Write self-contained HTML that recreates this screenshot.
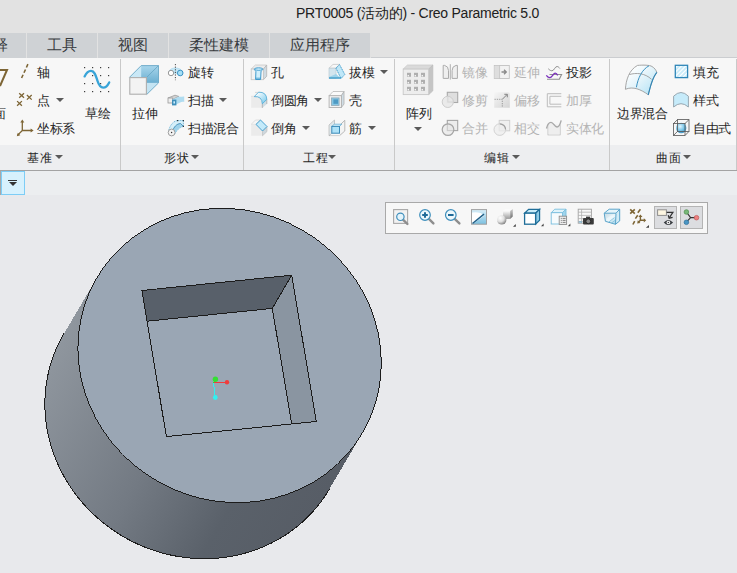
<!DOCTYPE html>
<html><head><meta charset="utf-8">
<style>
*{margin:0;padding:0;box-sizing:border-box}
html,body{width:737px;height:573px;overflow:hidden;background:#e8e9ec;font-family:"Liberation Sans",sans-serif;position:relative}
.a{position:absolute}
#title{left:0;top:0;width:737px;height:58px;background:#e2e2e2}
#ttxt{left:296px;top:5px;font-size:14px;letter-spacing:-0.25px;line-height:16px;color:#202020;white-space:nowrap}
#tabs{left:0;top:33px;width:370px;height:25px;background:#cfd2d5}
.tab{top:33px;height:25px;font-size:15px;color:#383b3e;line-height:23px;white-space:nowrap}
.tdiv{top:33px;width:1px;height:25px;background:#e2e2e2}
#ribbon{left:0;top:58px;width:737px;height:87px;background:#f7f7f7}
#band{left:0;top:145px;width:737px;height:25px;background:#edeef0}
#bline{left:0;top:170px;width:737px;height:1px;background:#a3a3a3}
#trow{left:0;top:171px;width:737px;height:24px;background:#eceef0}
.sep{top:59px;width:1px;height:111px;background:#c9c9c9}
.t{font-size:13px;letter-spacing:-0.5px;color:#262626;white-space:nowrap;line-height:16px}
.g{color:#b4b4b4}
.lb{font-size:12px;letter-spacing:1px;line-height:16px}
.dd{width:0;height:0;border-left:4px solid transparent;border-right:4px solid transparent;border-top:4.5px solid #5a5a5a}
</style></head><body>
<svg class="a" style="left:0;top:0" width="737" height="573" viewBox="0 0 737 573" shape-rendering="crispEdges">
<defs><linearGradient id="cyl" gradientUnits="userSpaceOnUse" x1="96" y1="278" x2="362" y2="432">
<stop offset="0" stop-color="#8f969e"/><stop offset="0.45" stop-color="#737a83"/><stop offset="0.75" stop-color="#5a616a"/><stop offset="1" stop-color="#575d66"/></linearGradient></defs>
<path d="M362.27 433.30 L329.27 489.30 L326.87 493.22 L324.33 497.06 L321.67 500.82 L318.88 504.48 L315.97 508.06 L312.94 511.53 L309.79 514.91 L306.53 518.18 L303.16 521.34 L299.67 524.39 L296.09 527.33 L292.41 530.15 L288.62 532.86 L284.75 535.44 L280.79 537.89 L276.74 540.22 L272.61 542.42 L268.41 544.49 L264.13 546.42 L259.79 548.22 L255.38 549.88 L250.91 551.40 L246.39 552.78 L241.82 554.01 L237.20 555.11 L232.54 556.05 L227.84 556.86 L223.12 557.52 L218.36 558.03 L213.59 558.39 L208.80 558.60 L203.99 558.67 L199.18 558.59 L194.37 558.36 L189.55 557.98 L184.75 557.45 L179.96 556.78 L175.18 555.96 L170.42 555.00 L165.70 553.89 L161.00 552.64 L156.34 551.25 L151.72 549.71 L147.14 548.04 L142.61 546.23 L138.14 544.28 L133.73 542.20 L129.38 539.99 L125.10 537.64 L120.89 535.18 L116.75 532.58 L112.70 529.87 L108.73 527.03 L104.85 524.08 L101.06 521.02 L97.37 517.84 L93.78 514.56 L90.29 511.18 L86.91 507.69 L83.64 504.11 L80.48 500.43 L77.44 496.67 L74.52 492.82 L71.73 488.89 L69.05 484.88 L66.51 480.79 L64.10 476.64 L61.82 472.42 L59.68 468.14 L57.67 463.80 L55.81 459.41 L54.08 454.97 L52.50 450.48 L51.07 445.96 L49.78 441.40 L48.64 436.82 L47.65 432.21 L46.81 427.57 L46.12 422.92 L45.58 418.26 L45.19 413.59 L44.96 408.92 L44.87 404.26 L44.94 399.60 L45.17 394.95 L45.54 390.32 L46.07 385.71 L46.75 381.12 L47.58 376.57 L48.56 372.05 L49.69 367.57 L50.97 363.14 L52.40 358.75 L53.96 354.42 L55.68 350.14 L57.53 345.93 L59.53 341.78 L61.66 337.71 L63.93 333.70 L96.93 277.70 Z" fill="url(#cyl)"/><path d="M329.27 489.30 L326.87 493.22 L324.33 497.06 L321.67 500.82 L318.88 504.48 L315.97 508.06 L312.94 511.53 L309.79 514.91 L306.53 518.18 L303.16 521.34 L299.67 524.39 L296.09 527.33 L292.41 530.15 L288.62 532.86 L284.75 535.44 L280.79 537.89 L276.74 540.22 L272.61 542.42 L268.41 544.49 L264.13 546.42 L259.79 548.22 L255.38 549.88 L250.91 551.40 L246.39 552.78 L241.82 554.01 L237.20 555.11 L232.54 556.05 L227.84 556.86 L223.12 557.52 L218.36 558.03 L213.59 558.39 L208.80 558.60 L203.99 558.67 L199.18 558.59 L194.37 558.36 L189.55 557.98 L184.75 557.45 L179.96 556.78 L175.18 555.96 L170.42 555.00 L165.70 553.89 L161.00 552.64 L156.34 551.25 L151.72 549.71 L147.14 548.04 L142.61 546.23 L138.14 544.28 L133.73 542.20 L129.38 539.99 L125.10 537.64 L120.89 535.18 L116.75 532.58 L112.70 529.87 L108.73 527.03 L104.85 524.08 L101.06 521.02 L97.37 517.84 L93.78 514.56 L90.29 511.18 L86.91 507.69 L83.64 504.11 L80.48 500.43 L77.44 496.67 L74.52 492.82 L71.73 488.89 L69.05 484.88 L66.51 480.79 L64.10 476.64 L61.82 472.42 L59.68 468.14 L57.67 463.80 L55.81 459.41 L54.08 454.97 L52.50 450.48 L51.07 445.96 L49.78 441.40 L48.64 436.82 L47.65 432.21 L46.81 427.57 L46.12 422.92 L45.58 418.26 L45.19 413.59 L44.96 408.92 L44.87 404.26 L44.94 399.60 L45.17 394.95 L45.54 390.32 L46.07 385.71 L46.75 381.12 L47.58 376.57 L48.56 372.05 L49.69 367.57 L50.97 363.14 L52.40 358.75 L53.96 354.42 L55.68 350.14 L57.53 345.93 L59.53 341.78 L61.66 337.71 L63.93 333.70" fill="none" stroke="#1c1c1c" stroke-width="1"/>
<ellipse cx="229.6" cy="355.5" rx="153.8" ry="145" transform="rotate(29.4 229.6 355.5)" fill="#9aa6b4" stroke="#1c1c1c" stroke-width="1"/>
<polygon points="141.9,290.5 291.7,275.2 272.3,308.4 147.05,321.2" fill="#58606a"/>
<polygon points="291.7,275.2 316.3,421.5 291.7,424 272.3,308.4" fill="#8a95a1"/>
<g fill="none" stroke="#1c1c1c" stroke-width="1">
<polygon points="141.9,290.5 291.7,275.2 316.3,421.5 166.4,436.6"/>
<polyline points="147.05,321.2 272.3,308.4 291.7,424"/>
<line x1="291.7" y1="275.2" x2="272.3" y2="308.4"/>
</g>
<line x1="213.5" y1="383" x2="227" y2="382.3" stroke="#f03c3c" stroke-width="1"/>
<line x1="213.5" y1="383" x2="215.3" y2="397.5" stroke="#30f0f0" stroke-width="1"/>
<line x1="213.5" y1="383" x2="215.4" y2="379.2" stroke="#30e030" stroke-width="1"/>
<g shape-rendering="geometricPrecision">
<circle cx="215.4" cy="379.2" r="2.7" fill="#33e033"/>
<circle cx="227" cy="382.2" r="2.2" fill="#f03c3c"/>
<circle cx="215.3" cy="397.5" r="2.4" fill="#33f0f0"/>
</g>
</svg>
<div class="a" id="title"></div>
<div class="a" id="ttxt">PRT0005 (活动的) - Creo Parametric 5.0</div>
<div class="a" id="tabs"></div><div class="a" style="left:371px;top:57px;width:366px;height:1px;background:#cbcdd0"></div>
<div class="a tab" style="left:-7px">释</div>
<div class="a tdiv" style="left:26px"></div>
<div class="a tab" style="left:47px">工具</div>
<div class="a tdiv" style="left:97px"></div>
<div class="a tab" style="left:118px">视图</div>
<div class="a tdiv" style="left:168px"></div>
<div class="a tab" style="left:189px">柔性建模</div>
<div class="a tdiv" style="left:269px"></div>
<div class="a tab" style="left:290px">应用程序</div>

<div class="a" id="ribbon"></div>
<div class="a" id="band"></div>
<div class="a" id="bline"></div>
<div class="a" id="trow"></div>
<div class="a sep" style="left:120px"></div>
<div class="a sep" style="left:243px"></div>
<div class="a sep" style="left:394px"></div>
<div class="a sep" style="left:609px"></div>
<div class="a sep" style="left:736px"></div>

<!--ICONS1--><svg class="a" style="left:0;top:0" width="737" height="240" viewBox="0 0 737 240">
<defs>
<linearGradient id="gb1" x1="0" y1="0" x2="0" y2="1"><stop offset="0" stop-color="#a8d6ec"/><stop offset="1" stop-color="#6aaed0"/></linearGradient>
<linearGradient id="gb2" x1="0" y1="0" x2="1" y2="1"><stop offset="0" stop-color="#f0f9fd"/><stop offset="1" stop-color="#bfe6f7"/></linearGradient>
<radialGradient id="sph" cx="0.4" cy="0.35" r="0.7"><stop offset="0" stop-color="#ffffff"/><stop offset="0.6" stop-color="#d8d8d8"/><stop offset="1" stop-color="#9a9a9a"/></radialGradient>
<radialGradient id="bsph" cx="0.4" cy="0.35" r="0.7"><stop offset="0" stop-color="#d8f2fc"/><stop offset="0.6" stop-color="#7cc6e6"/><stop offset="1" stop-color="#3a90c0"/></radialGradient>
</defs>
<!-- datum: plane partial -->
<polyline points="-1,70 7,70 0,86" fill="none" stroke="#7d6535" stroke-width="2"/>
<!-- axis -->
<line x1="27.9" y1="64.2" x2="20.9" y2="79.5" stroke="#7d6535" stroke-width="1.6" stroke-dasharray="3.6 2.2"/>
<!-- point -->
<g stroke="#7d6535" stroke-width="1.3">
<path d="M19.2 93.2l4.8 4.6M24 93.2l-4.8 4.6"/>
<path d="M26.9 95l4.8 4.6M31.7 95l-4.8 4.6"/>
<path d="M17.1 101.1l4.8 4.6M21.9 101.1l-4.8 4.6"/>
</g>
<!-- csys -->
<g stroke="#7d6535" stroke-width="1.3" fill="none">
<path d="M22.3 122v8.5h9.5M22.3 130.5l-4.6 4.6"/>
</g>
<g fill="#7d6535"><path d="M22.3 119.6l-2 3h4z"/><path d="M33.6 130.5l-3-2v4z"/><path d="M16.8 136.2l1-3.5 2.5 2.5z"/></g>
<!-- sketch -->
<g fill="#3c3c3c">
<rect x="84" y="67" width="1.2" height="1.2"/><rect x="92" y="67" width="1.2" height="1.2"/><rect x="100" y="67" width="1.2" height="1.2"/><rect x="108" y="67" width="1.2" height="1.2"/>
<rect x="92" y="75" width="1.2" height="1.2"/><rect x="100" y="75" width="1.2" height="1.2"/><rect x="108" y="75" width="1.2" height="1.2"/>
<rect x="84" y="83" width="1.2" height="1.2"/><rect x="92" y="83" width="1.2" height="1.2"/><rect x="100" y="83" width="1.2" height="1.2"/>
<rect x="84" y="91" width="1.2" height="1.2"/><rect x="92" y="91" width="1.2" height="1.2"/><rect x="100" y="91" width="1.2" height="1.2"/><rect x="108" y="91" width="1.2" height="1.2"/>
</g>
<path d="M84.6 76.4C86.5 72.5 88.8 70.9 91 70.9C94.6 70.9 95.8 75.5 97.3 80.3C98.8 85 100.4 87.6 103.2 87.6C106 87.6 107.8 85.2 109.2 82.4" fill="none" stroke="#38a4d8" stroke-width="2.3" stroke-linecap="round"/>
<!-- extrude -->
<polygon points="129.5,77.3 141.2,65.6 158.5,65.6 146.7,77.3" fill="#c9e8f6"/>
<rect x="141.2" y="65.6" width="17.3" height="17.3" fill="url(#gb1)"/>
<polygon points="146.7,82.9 158.5,82.9 146.7,94.5" fill="#c4e4f3"/>
<g stroke="#6aa8c6" stroke-width="0.9" fill="none"><path d="M129.5 77.3L141.2 65.6H158.5L146.7 77.3M158.5 65.6V82.9L146.7 94.5"/></g>
<rect x="129.8" y="77.6" width="16.6" height="16.6" fill="#f3f3f3" stroke="#aeaeae" stroke-width="1.1"/>
<!-- revolve -->
<path d="M168.6 72.6C169.4 69 172.5 68 175.4 68C178.3 68 181.6 69 182.8 72.6Z" fill="#c4e7f6"/>
<path d="M168.6 72.6C169.4 69 172.5 68 175.4 68C178.3 68 181.6 69 182.8 72.6" fill="none" stroke="#a6d6ec" stroke-width="0.7"/>
<circle cx="171" cy="73" r="2.7" fill="#fff" stroke="#8c8c8c" stroke-width="0.9"/>
<circle cx="180.2" cy="73" r="2.8" fill="#a6dff6" stroke="#3a92c4" stroke-width="1"/>
<line x1="173.7" y1="73" x2="177.4" y2="73" stroke="#7cc0e0" stroke-width="0.8"/>
<line x1="175.4" y1="64" x2="175.4" y2="80.2" stroke="#3a3a3a" stroke-width="0.9" stroke-dasharray="1.2 1.4"/>
<!-- sweep -->
<polygon points="168,98 175,95.2 179,96.5 172,99.6" fill="#d2d2d2" stroke="#9a9a9a" stroke-width="0.8"/>
<rect x="168" y="98" width="4.5" height="5" fill="#eeeeee" stroke="#9a9a9a" stroke-width="0.8"/>
<path d="M172 99.6L179 96.5C181 97.5 182.5 96 184.2 96.5V102C182 101 179 103 176.4 104.5Z" fill="#b0dcf0"/>
<rect x="172" y="99.6" width="4.4" height="5.8" fill="#3f8fba"/>
<rect x="173.4" y="101.3" width="1.6" height="2.2" fill="#cfefff"/>
<!-- swept blend -->
<path d="M168.8 130.3C170 125 173.5 121 177.6 120.5H183.4V126.4C179 127.5 176 131 174.6 134.3Z" fill="#d6eff9" stroke="#6ab2d6" stroke-width="0.9" stroke-dasharray="1.2 0.8"/><path d="M172.5 131C174 127 176.5 123.8 180.6 123.5L183.4 126.4C179 127.5 176 131 174.6 134.3Z" fill="#9fd2ea"/>
<path d="M172.5 131C174 127 176.5 123.8 180.6 123.5L183.4 126.4" fill="none" stroke="#3c8cb8" stroke-width="0.9"/>
<circle cx="171.6" cy="132.5" r="3.4" fill="#f2f2f2" stroke="#a0a0a0" stroke-width="1"/>
<circle cx="171.6" cy="132.5" r="0.7" fill="#333"/>
<rect x="177" y="120" width="1.2" height="1.2" fill="#333"/><rect x="182.8" y="120" width="1.2" height="1.2" fill="#333"/><rect x="182.8" y="125.8" width="1.2" height="1.2" fill="#333"/>
</svg>
<!--/ICONS1--><!--ICONS2--><svg class="a" style="left:0;top:0" width="737" height="240" viewBox="0 0 737 240">
<defs>
<linearGradient id="fil" x1="0" y1="0" x2="1" y2="1"><stop offset="0.2" stop-color="#f2fafd"/><stop offset="1" stop-color="#70c8ec"/></linearGradient>
<linearGradient id="bb" x1="0" y1="0" x2="1" y2="1"><stop offset="0.15" stop-color="#ffffff"/><stop offset="0.5" stop-color="#e2f3fa"/><stop offset="1" stop-color="#ace0f5"/></linearGradient>
<linearGradient id="off" x1="0" y1="0" x2="1" y2="1"><stop offset="0" stop-color="#f6f6f6"/><stop offset="1" stop-color="#d4d4d4"/></linearGradient>
<radialGradient id="bs" cx="0.4" cy="0.35" r="0.7"><stop offset="0" stop-color="#e4f6fd"/><stop offset="0.55" stop-color="#7ac6e8"/><stop offset="1" stop-color="#3a8fc0"/></radialGradient>
<pattern id="hatch" width="3" height="3" patternUnits="userSpaceOnUse" patternTransform="rotate(45)"><rect width="3" height="3" fill="#c6eaf9"/><rect width="1.2" height="3" fill="#ffffff"/></pattern>
</defs>
<!-- hole -->
<polygon points="251.2,69 255.4,65 266.7,65 263.5,69" fill="#ececec" stroke="#c9c9c9" stroke-width="0.8"/>
<polygon points="263.5,69 266.7,65 266.7,76.2 263.5,79.7" fill="#cfdbe3" stroke="#b4b4b4" stroke-width="0.8"/>
<rect x="251.2" y="69" width="12.3" height="10.7" fill="#f3f3f3" stroke="#c4c4c4" stroke-width="0.8"/>
<path d="M254.4 69.2C254.4 67.4 262.8 67.4 262.8 69.2C262.8 70.3 261.2 70.7 261 71.5L260.6 79.5H255.6L255.9 71.5C255.8 70.7 254.4 70.3 254.4 69.2Z" fill="#d0effc" stroke="#3092c8" stroke-width="0.9"/>
<path d="M255.2 69.6C256.5 70.6 261 70.6 262 69.6" fill="none" stroke="#3092c8" stroke-width="0.8"/>
<path d="M255.7 78.2H260.7" stroke="#3092c8" stroke-width="0.8"/>
<!-- fillet -->
<path d="M251.1 96.4L255 92.4H259.6L255.2 96.4Z" fill="#f6f6f6"/>
<path d="M251.1 96.4H259.6" stroke="#c8c8c8" stroke-width="0.7"/>
<path d="M255 92.4H260" stroke="#c8c8c8" stroke-width="0.7"/>
<path d="M251.1 96.4H255.2Q262.3 96.4 262.3 103.5V107.7H251.1Z" fill="#ebebeb"/>
<path d="M262.3 103.5L266.8 99.3V104L262.3 107.9Z" fill="#cfdde4"/>
<path d="M262.3 103.8V107.9M266.8 99.3V104" stroke="#a8a8a8" stroke-width="0.8"/>
<path d="M254.2 96.6Q262.1 96 262.3 103.8L266.8 99.4Q266.5 91.8 258.6 92.2Z" fill="url(#fil)" stroke="#48a6d4" stroke-width="0.8"/>
<!-- chamfer -->
<path d="M251.1 124.4L255.5 120H260.5L256 124.4Z" fill="#f6f6f6" stroke="#d0d0d0" stroke-width="0.6"/>
<path d="M251.1 124.4H256L262.5 131V135.7H251.1Z" fill="#ebebeb"/>
<path d="M262.5 131L267 126.5V131.5L262.5 135.8Z" fill="#ced7dd" stroke="#b8b8b8" stroke-width="0.6"/>
<path d="M256 124.4L260.5 120L267 126.5L262.5 131Z" fill="#c3eafa" stroke="#3a98cb" stroke-width="0.9"/>
<!-- draft -->
<path d="M329 68.2L333 64.4H339.5L335.7 68.2Z" fill="#f8f8f8" stroke="#c6c6c6" stroke-width="0.8"/>
<rect x="329" y="68.2" width="7" height="10" fill="#d3e5ee" stroke="#bccbd3" stroke-width="0.7"/>
<path d="M336 68.2L339.5 64.5L344.8 74.5L341 78.5Z" fill="#bfe7f8" stroke="#3a98cb" stroke-width="0.9" stroke-dasharray="1.4 0.6"/>
<path d="M336 74L341 78.5H329V77Z" fill="#9fd3ea"/>
<line x1="329" y1="78" x2="341" y2="78" stroke="#3d9ac8" stroke-width="1.3"/>
<!-- shell -->
<path d="M329.1 95.7L333 91.5H344L341.4 95.7Z" fill="#fafafa" stroke="#b8b8b8" stroke-width="0.8"/>
<path d="M341.4 95.7L344 91.5V104L341.4 107.5Z" fill="#cfdde5" stroke="#b0b0b0" stroke-width="0.8"/>
<rect x="329.1" y="95.7" width="12.3" height="11.8" fill="#f3f3f3" stroke="#b0b0b0" stroke-width="0.9"/>
<rect x="331.4" y="97.9" width="7.7" height="7.5" fill="#86c6e4" stroke="#8fa8b6" stroke-width="0.8"/>
<rect x="333.4" y="99.4" width="4.6" height="4.4" fill="#4d9ac4"/>
<!-- rib -->
<path d="M329 125L334.5 120V131L329 135.7Z" fill="#dfe8ec" stroke="#b4b4b4" stroke-width="0.7"/>
<path d="M339.5 125.5L344.8 120.3V131L339.5 135.7" fill="#f4f4f4" stroke="#a8a8a8" stroke-width="0.8"/>
<path d="M331.8 126.4L334.3 124.2H341.8L339.5 126.4Z" fill="#d6f1fc" stroke="#5aa8d0" stroke-width="0.7"/>
<rect x="331.8" y="126.4" width="7.7" height="6.8" fill="#aee2f8" stroke="#3a8ab8" stroke-width="1"/>
<line x1="329.5" y1="135.6" x2="339.5" y2="135.6" stroke="#9a9a9a" stroke-width="0.8" stroke-dasharray="1 1"/>
<!-- pattern -->
<path d="M403.2 69.1L407.4 65H432.8L428.7 69.1Z" fill="#dadada" stroke="#cbcbcb" stroke-width="0.8"/>
<path d="M428.7 69.1L432.8 65V90.8L428.7 94.6Z" fill="#c5c5c5" stroke="#bcbcbc" stroke-width="0.8"/>
<rect x="403.2" y="69.1" width="25.5" height="25.5" fill="#ededed" stroke="#c8c8c8" stroke-width="0.9"/>
<g fill="#afafaf">
<rect x="407" y="72.8" width="4" height="4"/><rect x="414" y="72.8" width="4" height="4"/><rect x="421" y="72.8" width="4" height="4"/>
<rect x="407" y="79.8" width="4" height="4"/><rect x="414" y="79.8" width="4" height="4"/><rect x="421" y="79.8" width="4" height="4"/>
<rect x="407" y="86.8" width="4" height="4"/><rect x="414" y="86.8" width="4" height="4"/><rect x="421" y="86.8" width="4" height="4"/>
</g>
<g fill="#f4f4f4">
<rect x="407.6" y="75" width="1.4" height="1.4"/><rect x="414.6" y="75" width="1.4" height="1.4"/><rect x="421.6" y="75" width="1.4" height="1.4"/>
<rect x="407.6" y="82" width="1.4" height="1.4"/><rect x="414.6" y="82" width="1.4" height="1.4"/><rect x="421.6" y="82" width="1.4" height="1.4"/>
<rect x="407.6" y="89" width="1.4" height="1.4"/><rect x="414.6" y="89" width="1.4" height="1.4"/><rect x="421.6" y="89" width="1.4" height="1.4"/>
</g>
<!-- mirror -->
<g stroke="#ababab" stroke-width="1" fill="#efefef">
<path d="M443.2 65.4H444.6Q448.5 66.2 448.5 70.6V78.4H443.2Z"/>
<path d="M457.4 65.4H456Q452.1 66.2 452.1 70.6V78.4H457.4Z"/>
</g>
<line x1="450.3" y1="64.2" x2="450.3" y2="79.6" stroke="#b0b0b0" stroke-width="1"/>
<!-- extend -->
<rect x="494.3" y="65.5" width="15" height="13" fill="#f2f2f2" stroke="#c2c2c2" stroke-width="0.9"/>
<rect x="494.6" y="65.8" width="5" height="12.4" fill="#dedede"/>
<line x1="499.6" y1="65.5" x2="499.6" y2="78.5" stroke="#c2c2c2" stroke-width="0.8"/>
<path d="M501.5 72H506M504 69.8L506.3 72L504 74.2" fill="none" stroke="#8a8a8a" stroke-width="1.3"/>
<!-- project -->
<path d="M547 79.3H559.3L561.6 74.5H549.5" fill="none" stroke="#909090" stroke-width="1.1"/>
<path d="M548.3 68.8C549.8 70.3 551 70.8 552 70.8C554 70.8 555 66.5 557 66.5C558 66.5 559 67.3 559.9 68.5" fill="none" stroke="#8c8c8c" stroke-width="1"/>
<path d="M546.3 75.3C547.5 76.8 548.6 77.6 549.8 77.6C552 77.6 553.3 73.2 555.2 73.2C556.3 73.2 557 74 557.7 75.4" fill="none" stroke="#7a2fbd" stroke-width="1.3"/>
<!-- trim -->
<rect x="447.3" y="92.3" width="10.4" height="10.2" fill="#dedede" stroke="#a9a9a9" stroke-width="1.1"/>
<circle cx="447.8" cy="101.9" r="5.6" fill="#e8e8e8" fill-opacity="0.9" stroke="#cdcdcd" stroke-width="1"/>
<path d="M447.8 96.3V101.9H453.4" fill="none" stroke="#d4d4d4" stroke-width="0.8"/>
<!-- offset -->
<path d="M494.2 92.2H507.8Q509.8 92.2 509.8 94.2V107.7H494.2Z" fill="url(#off)"/>
<path d="M494.5 99.3H502.3V107.6" fill="none" stroke="#8a8a8a" stroke-width="0.8" stroke-dasharray="1.3 1"/>
<path d="M502.5 99.1L507 94.6M504.3 94.3H507.3V97.3" fill="none" stroke="#777" stroke-width="0.9"/>
<!-- thicken -->
<path d="M561.3 93.7H547.3V106.8H561.3M561.3 96.3H549.9V104.2H561.3" fill="none" stroke="#bcbcbc" stroke-width="1"/>
<!-- merge -->
<rect x="447.3" y="120.4" width="10.4" height="10.2" fill="#ececec" stroke="#a6a6a6" stroke-width="1.1"/>
<circle cx="448" cy="129.6" r="5.8" fill="#e6e6e6" fill-opacity="0.55" stroke="#a6a6a6" stroke-width="1.2"/>
<!-- intersect -->
<rect x="499.2" y="120.4" width="10.5" height="10.4" fill="#f0f0f0" stroke="#d0d0d0" stroke-width="1"/>
<circle cx="499.8" cy="129.6" r="5.8" fill="#ececec" fill-opacity="0.7" stroke="#d2d2d2" stroke-width="1"/>
<path d="M499.8 123.8A5.8 5.8 0 0 1 505.6 129.6" fill="none" stroke="#a0a0a0" stroke-width="1.2"/>
<!-- solidify -->
<path d="M548.2 124.5V134.7H559.9V124.5" fill="#efefef" stroke="#acacac" stroke-width="1.1"/>
<path d="M548.2 124.6C549.5 123 550 122.4 551 122.4C553.5 122.4 554.5 127 557 127C558.5 127 559.3 125.5 559.9 124.5V134.7H548.2Z" fill="#eeeeee"/>
<path d="M546.5 128.5C547.5 124 549 122.4 551 122.4C553.5 122.4 554.5 127 557 127C559.5 127 560.5 123 561.2 120.4" fill="none" stroke="#a8a8a8" stroke-width="1.4"/>
<!-- boundary blend -->
<path d="M625.4 89.3C626 80 629 70 637.5 65.4C643 64.9 650 65 652 66.5C654.5 68 656 70 656.8 72.4C652 78 650 88 648.3 94.8C641 89.5 633 86 625.4 89.3Z" fill="url(#bb)" stroke="#9c9c9c" stroke-width="0.9"/>
<path d="M656.8 72.4C652 78 650 88 648.3 94.8" fill="none" stroke="#2f86b8" stroke-width="1.1"/>
<path d="M629.3 74.6C636 72.5 645 73 651.5 79.3" fill="none" stroke="#9c9c9c" stroke-width="0.9"/>
<path d="M649 65.8C642 69.5 638 78 636.4 87.3" fill="none" stroke="#3a90c0" stroke-width="1"/>
<!-- fill -->
<rect x="675.3" y="65.3" width="12.3" height="12.3" fill="url(#hatch)" stroke="#2f86b8" stroke-width="1.3"/>
<!-- style -->
<path d="M673.6 96.2Q681 88.8 688.4 96.2V107Q681 100.4 673.6 107Z" fill="#c6ebfa" stroke="#8e9ea8" stroke-width="0.9"/>
<!-- freestyle -->
<circle cx="681.2" cy="128" r="5.2" fill="url(#bs)"/>
<g fill="none" stroke="#555" stroke-width="0.8">
<rect x="673.5" y="123.5" width="11.5" height="12"/>
<rect x="677.5" y="119.6" width="11.5" height="11.8"/>
<path d="M673.5 123.5L677.5 119.6M685 123.5L689 119.6M685 135.5L689 131.4M673.5 135.5L677.5 131.4"/>
</g>
</svg>
<!--/ICONS2-->
<!-- 基准 -->
<div class="a t" style="left:-7px;top:106px">面</div>
<div class="a t" style="left:37px;top:65px">轴</div>
<div class="a t" style="left:37px;top:93px">点</div>
<div class="a dd" style="left:56px;top:97.5px"></div>
<div class="a t" style="left:37px;top:121px">坐标系</div>
<div class="a t" style="left:85px;top:106px">草绘</div>
<div class="a t lb" style="left:27px;top:150px">基准</div>
<div class="a dd" style="left:54.7px;top:154.8px"></div>

<!-- 形状 -->
<div class="a t" style="left:132px;top:106px">拉伸</div>
<div class="a t" style="left:188px;top:65px">旋转</div>
<div class="a t" style="left:188px;top:93px">扫描</div>
<div class="a dd" style="left:218.7px;top:97.5px"></div>
<div class="a t" style="left:188px;top:121px">扫描混合</div>
<div class="a t lb" style="left:164px;top:150px">形状</div>
<div class="a dd" style="left:191.3px;top:154.8px"></div>

<!-- 工程 -->
<div class="a t" style="left:271px;top:65px">孔</div>
<div class="a t" style="left:271px;top:93px">倒圆角</div>
<div class="a dd" style="left:313.5px;top:97.5px"></div>
<div class="a t" style="left:271px;top:121px">倒角</div>
<div class="a dd" style="left:301.6px;top:125.5px"></div>
<div class="a t" style="left:349px;top:65px">拔模</div>
<div class="a dd" style="left:379.7px;top:69.5px"></div>
<div class="a t" style="left:349px;top:93px">壳</div>
<div class="a t" style="left:349px;top:121px">筋</div>
<div class="a dd" style="left:367.5px;top:125.5px"></div>
<div class="a t lb" style="left:303px;top:150px">工程</div>
<div class="a dd" style="left:328.4px;top:154.8px"></div>

<!-- 编辑 -->
<div class="a t" style="left:406px;top:106px">阵列</div>
<div class="a dd" style="left:413.6px;top:127.4px"></div>
<div class="a t g" style="left:462px;top:65px">镜像</div>
<div class="a t g" style="left:462px;top:93px">修剪</div>
<div class="a t g" style="left:462px;top:121px">合并</div>
<div class="a t g" style="left:514px;top:65px">延伸</div>
<div class="a t g" style="left:514px;top:93px">偏移</div>
<div class="a t g" style="left:514px;top:121px">相交</div>
<div class="a t" style="left:566px;top:65px">投影</div>
<div class="a t g" style="left:566px;top:93px">加厚</div>
<div class="a t g" style="left:566px;top:121px">实体化</div>
<div class="a t lb" style="left:484px;top:150px">编辑</div>
<div class="a dd" style="left:511.6px;top:154.8px"></div>

<!-- 曲面 -->
<div class="a t" style="left:617px;top:106px">边界混合</div>
<div class="a t" style="left:693px;top:65px">填充</div>
<div class="a t" style="left:693px;top:93px">样式</div>
<div class="a t" style="left:693px;top:121px">自由式</div>
<div class="a t lb" style="left:656px;top:150px">曲面</div>
<div class="a dd" style="left:682.5px;top:154.8px"></div>

<!--TB-->
<div class="a" style="left:0;top:171px;width:1px;height:24px;background:#a8a8a8"></div>
<div class="a" style="left:1px;top:171px;width:24px;height:24px;background:#d7f1fd;border:1px solid #7dcdf6"></div>
<div class="a" style="left:8px;top:180px;width:9px;height:1.2px;background:#333"></div>
<div class="a" style="left:8.5px;top:182.3px;width:0;height:0;border-left:4px solid transparent;border-right:4px solid transparent;border-top:4.6px solid #333"></div>
<div class="a" style="left:385px;top:202px;width:323px;height:32px;background:#f7f7f7;border:1px solid #a9a9a9"></div>
<div class="a" style="left:654px;top:206px;width:23px;height:23px;background:#dcdde0;border:1px solid #b4b4b4"></div>
<div class="a" style="left:680px;top:206px;width:23px;height:23px;background:#dcdde0;border:1px solid #b4b4b4"></div>
<svg class="a" style="left:0;top:0" width="737" height="240" viewBox="0 0 737 240">
<defs>
<linearGradient id="rp" x1="0" y1="0" x2="0" y2="1"><stop offset="0" stop-color="#d9eef8"/><stop offset="1" stop-color="#7cc0e0"/></linearGradient>
<radialGradient id="ws" cx="0.35" cy="0.3" r="0.8"><stop offset="0" stop-color="#ffffff"/><stop offset="0.5" stop-color="#e0e0e0"/><stop offset="1" stop-color="#6e6e6e"/></radialGradient><linearGradient id="cfr" x1="0" y1="0" x2="0" y2="1"><stop offset="0" stop-color="#fbfbfb"/><stop offset="1" stop-color="#9a9a9a"/></linearGradient><linearGradient id="csd" x1="0" y1="0" x2="0" y2="1"><stop offset="0" stop-color="#d0d0d0"/><stop offset="1" stop-color="#6a6a6a"/></linearGradient>
<linearGradient id="wc" x1="0" y1="0" x2="1" y2="1"><stop offset="0" stop-color="#ffffff"/><stop offset="1" stop-color="#b8b8b8"/></linearGradient>
<linearGradient id="sec" x1="0" y1="0" x2="1" y2="1"><stop offset="0" stop-color="#c4d8e2"/><stop offset="0.5" stop-color="#e8f4f9"/><stop offset="1" stop-color="#9fd2e8"/></linearGradient>
</defs>
<!-- refit -->
<rect x="393.6" y="209.6" width="14" height="13.8" fill="#f2f2f2" stroke="#a8a8a8" stroke-width="1.1"/>
<line x1="403" y1="219.6" x2="407.4" y2="224" stroke="#8e8e8e" stroke-width="2.4" stroke-linecap="round"/>
<circle cx="400.4" cy="216.8" r="3.7" fill="#e4f4fb" stroke="#3f8fbc" stroke-width="1.2"/>
<!-- zoom in -->
<line x1="428.6" y1="218.7" x2="433.4" y2="223.4" stroke="#8e8e8e" stroke-width="2.4" stroke-linecap="round"/>
<circle cx="425" cy="215" r="5.3" fill="#eef8fc" stroke="#3f8fbc" stroke-width="1.2"/>
<path d="M422.2 215H427.8M425 212.2V217.8" stroke="#1f6a98" stroke-width="2"/>
<!-- zoom out -->
<line x1="454.4" y1="218.7" x2="459.4" y2="223.4" stroke="#8e8e8e" stroke-width="2.4" stroke-linecap="round"/>
<circle cx="450.8" cy="215" r="5.3" fill="#eef8fc" stroke="#3f8fbc" stroke-width="1.2"/>
<path d="M448 215H453.6" stroke="#1f6a98" stroke-width="2"/>
<!-- repaint -->
<rect x="471.5" y="209.6" width="15" height="14.6" fill="url(#rp)"/>
<path d="M471.5 212.5Q480 211 484.5 215.5L472.5 224.2H471.5Z" fill="#ffffff"/>
<rect x="471.5" y="209.6" width="15" height="14.6" fill="none" stroke="#a0a0a0" stroke-width="1"/>
<line x1="472.5" y1="223.5" x2="484" y2="214.2" stroke="#1f5f88" stroke-width="1.5"/>
<!-- shading -->
<path d="M503 210.9L505.2 208.9H512.8L510.1 210.9Z" fill="#fafafa"/>
<path d="M510.1 210.9L512.8 208.9V216.5L510.1 218.9Z" fill="url(#csd)"/>
<rect x="503" y="210.9" width="7.1" height="8" fill="url(#cfr)"/>
<circle cx="501.7" cy="219.9" r="4.7" fill="url(#ws)"/>
<path d="M513 226.8H515.8V224Z" fill="#444"/>
<!-- view cube -->
<path d="M524.6 213.2L528.6 209.3H539.6L535.6 213.2Z" fill="#c9ecf9" stroke="#1e6d98" stroke-width="1.2"/>
<path d="M535.6 213.2L539.6 209.3V220.3L535.6 224.2Z" fill="#8fcbe6" stroke="#1e6d98" stroke-width="1.2"/>
<rect x="524.6" y="213.2" width="11" height="11" fill="#ffffff" stroke="#1e6d98" stroke-width="1.3"/>
<path d="M541 226.3H543.6V223.6Z" fill="#444"/>
<!-- view manager -->
<path d="M551.2 212.7L554.8 209.2H566L562.5 212.7Z" fill="#dff3fb" stroke="#79bede" stroke-width="0.9"/>
<path d="M562.5 212.7L566 209.2V220.5L562.5 224Z" fill="#9fd4ec" stroke="#79bede" stroke-width="0.9"/>
<rect x="551.2" y="212.7" width="11.3" height="11.3" fill="#f6fbfd" stroke="#79bede" stroke-width="0.9"/>
<rect x="559.2" y="216.2" width="7.4" height="8.2" fill="#f0f0f0" stroke="#8a8a8a" stroke-width="0.9"/>
<path d="M560.8 218.4h1M562.6 218.4h3M560.8 220.4h1M562.6 220.4h3M560.8 222.4h1M562.6 222.4h3" stroke="#666" stroke-width="0.8"/>
<path d="M567.8 226.3H570.4V223.6Z" fill="#444"/>
<!-- saved views -->
<rect x="578.2" y="209.2" width="13.2" height="14" fill="#f8f8f8" stroke="#a0a0a0" stroke-width="0.9"/>
<path d="M578.2 212.2H591.4M578.2 215.4H591.4M578.2 218.6H585M578.2 221.6H583M581.6 209.2V223.2" stroke="#b0b0b0" stroke-width="0.8"/>
<path d="M578.8 222H582" stroke="#6ab0d4" stroke-width="1"/>
<rect x="583" y="218" width="10.8" height="6.6" rx="1" fill="#3a3a3a"/>
<rect x="586" y="216.6" width="4.2" height="2" fill="#3a3a3a"/>
<circle cx="588.3" cy="221.3" r="2.4" fill="#8a8a8a" stroke="#1e1e1e" stroke-width="0.8"/>
<!-- section -->
<path d="M604.2 213.2L609.2 209.2H619.7L616 213.4Z" fill="#e6f5fb"/>
<path d="M616 213.4L619.7 209.2V220.9L615.5 224.3Z" fill="#d2ecf7"/>
<path d="M604.2 213.2H616L615.5 224.3L605.4 221.3Z" fill="url(#sec)"/>
<path d="M606 219L611 215.4H615.8V217.5L609 222.2Z" fill="#eef8fc" opacity="0.7"/>
<path d="M608.8 222L614.5 217.6M611.5 223L615.6 220" stroke="#8ec8e2" stroke-width="1"/>
<path d="M604.2 213.2L609.2 209.2H619.7V220.9L615.5 224.3L605.4 221.3Z M604.2 213.2H616L619.7 209.2M616 213.4L615.5 224.3" fill="none" stroke="#5aa4ca" stroke-width="1"/>
<!-- datum display -->
<g stroke="#7d6535" stroke-width="1.6" fill="none">
<path d="M630.2 209.3l4.6 4.4M634.8 209.3l-4.6 4.4"/>
<path d="M640.4 209.2l-2.6 3.6M637.7 215.3l-2.3 3.3M634.7 221.1l-1.8 3.4"/>
</g>
<g stroke="#7d6535" stroke-width="1.4" fill="none">
<path d="M640.4 216.5v3.8h4M640.4 220.3l-2 2"/>
</g>
<path d="M640.4 214.6l-2.1 2.4h4.2zM646.2 220.3l-2.4-2.1v4.2zM637.2 223.5l0.6-3.2 2.6 2.6z" fill="#7d6535"/>
<path d="M645.8 227.8H649V225.1Z" fill="#444"/>
<!-- annotation display -->
<rect x="657.6" y="209.8" width="8.8" height="5.6" fill="#fdf6e2" stroke="#8e8e8e" stroke-width="1"/>
<path d="M666.6 212.4H672.9L669.4 217.6" fill="none" stroke="#333" stroke-width="1.2"/>
<path d="M668.2 215.2L669.2 218.2L672.6 217.4" fill="none" stroke="#333" stroke-width="1.3"/>
<path d="M663.7 222.5Q668.4 217.4 673.1 222.5Q668.4 227.6 663.7 222.5Z" fill="#3a3e42"/>
<circle cx="668.4" cy="222.5" r="1.8" fill="#fff"/>
<circle cx="668.4" cy="222.5" r="0.8" fill="#3a3e42"/>
<!-- spin center -->
<path d="M686.4 212L690.6 217.6L696.4 217.6M690.6 217.6L686.4 222.2" fill="none" stroke="#333" stroke-width="1.1"/>
<circle cx="686.4" cy="212" r="2.3" fill="#78b878" stroke="#4e8e4e" stroke-width="0.7"/>
<circle cx="696.5" cy="217.7" r="2.3" fill="#ee8080" stroke="#c05858" stroke-width="0.7"/>
<circle cx="686.4" cy="222.3" r="2.3" fill="#4a96c4" stroke="#2e6e9a" stroke-width="0.7"/>
</svg>
<!--/TB-->
</body></html>
